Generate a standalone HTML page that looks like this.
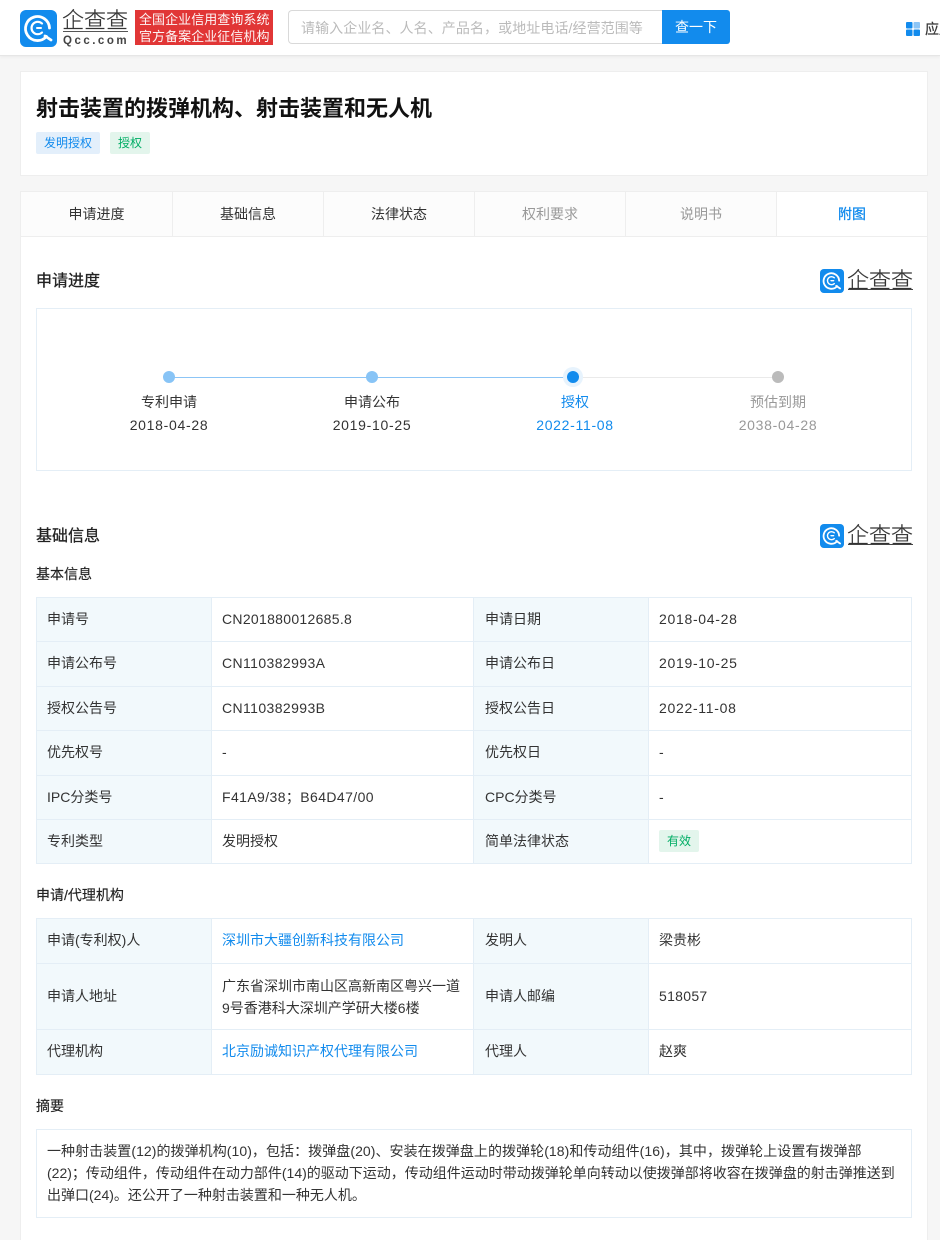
<!DOCTYPE html>
<html lang="zh-CN"><head><meta charset="utf-8"><title>专利详情</title>
<style>
*{box-sizing:border-box;margin:0;padding:0}
html,body{width:940px;height:1240px;overflow:hidden}
body{position:relative;background:#f6f6f6;font-family:"Liberation Sans","Noto Sans CJK SC",sans-serif;font-size:14px;color:#333}
.a{position:absolute;white-space:nowrap}
.b{position:absolute}
.t{line-height:20px}
.d{letter-spacing:.7px}
.n{letter-spacing:.4px}
.lab{background:#f2f9fc}
.line-h{position:absolute;height:1px;background:#e4eef6}
.line-v{position:absolute;width:1px;background:#e4eef6}
.tab{position:absolute;top:192px;height:44px;line-height:44px;text-align:center;background:#fcfcfc;border-right:1px solid #eee}
.h2{font-size:16px;font-weight:400;color:#222;-webkit-text-stroke:.3px #222;line-height:22px}
.h3{font-size:14px;color:#222;-webkit-text-stroke:.15px #222}
.lg{font-size:22px;line-height:30px;color:#333;font-weight:300;-webkit-text-stroke:.2px #333}
a{color:#128bed;text-decoration:none}
</style></head><body>

<!-- header -->
<div class="b" style="left:0;top:0;width:940px;height:56px;background:#fff;border-bottom:1px solid #e6e6e6;box-shadow:0 1px 3px rgba(0,0,0,.05)"></div>
<svg class="b" style="left:20px;top:10px" width="37" height="37" viewBox="0 0 37 37">
<rect width="37" height="37" rx="6" fill="#128bed"/>
<path d="M26.5 26.5A12 12 0 1 1 29.5 18" fill="none" stroke="#fff" stroke-width="2.8" stroke-linecap="round"/>
<path d="M22 22.5A6.2 6.2 0 1 1 22 13.5" fill="none" stroke="#fff" stroke-width="2.2" stroke-linecap="round"/>
<path d="M17 18h4" stroke="#fff" stroke-width="2" stroke-linecap="round"/>
<path d="M25 26l6 4" stroke="#fff" stroke-width="2.8" stroke-linecap="round"/>
</svg>
<div class="a lg" style="left:62px;top:6px">企查查</div>
<div class="b" style="left:63px;top:31px;width:65px;height:1px;background:#555"></div>
<div class="a" style="left:63px;top:35px;font-size:11.5px;line-height:12px;font-weight:700;letter-spacing:2.5px;color:#444">Qcc.com</div>
<div class="b" style="left:135px;top:10px;width:138px;height:35px;background:#e13636"></div>
<div class="a" style="left:139px;top:11px;font-size:13px;line-height:17px;color:#fff;letter-spacing:.05px;opacity:.95">全国企业信用查询系统<br>官方备案企业征信机构</div>
<div class="b" style="left:288px;top:10px;width:375px;height:34px;background:#fff;border:1px solid #d9d9d9;border-right:0;border-radius:4px 0 0 4px"></div>
<div class="a" style="left:301px;top:18px;font-size:14px;line-height:20px;color:#bbb;letter-spacing:.08px">请输入企业名、人名、产品名，或地址电话/经营范围等</div>
<div class="b" style="left:662px;top:10px;width:68px;height:34px;background:#128bed;border-radius:0 3px 3px 0;color:#fff;text-align:center;line-height:34px;font-size:14px">查一下</div>
<svg class="b" style="left:906px;top:22px" width="14" height="14" viewBox="0 0 14 14"><rect width="6.5" height="6.5" rx="1" fill="#128bed"/><rect x="7.5" width="6.5" height="6.5" rx="1" fill="#8cc5f6"/><rect y="7.5" width="6.5" height="6.5" rx="1" fill="#128bed"/><rect x="7.5" y="7.5" width="6.5" height="6.5" rx="1" fill="#128bed"/></svg>
<div class="a" style="left:925px;top:19px;line-height:20px;color:#333;-webkit-text-stroke:.2px #333">应用</div>

<!-- title card -->
<div class="b" style="left:20px;top:71px;width:908px;height:105px;background:#fff;border:1px solid #eee"></div>
<div class="a" style="left:36px;top:94px;font-size:22px;line-height:30px;font-weight:700;color:#111">射击装置的拨弹机构、射击装置和无人机</div>
<div class="a" style="left:36px;top:132px;width:64px;height:22px;background:#e3effb;border-radius:2px;color:#128bed;font-size:12px;line-height:22px;text-align:center">发明授权</div>
<div class="a" style="left:110px;top:132px;width:40px;height:22px;background:#e3f5ec;border-radius:2px;color:#00ad65;font-size:12px;line-height:22px;text-align:center">授权</div>

<!-- main card -->
<div class="b" style="left:20px;top:191px;width:908px;height:1060px;background:#fff;border:1px solid #eee"></div>
<div class="tab" style="left:21px;width:152px">申请进度</div>
<div class="tab" style="left:173px;width:151px">基础信息</div>
<div class="tab" style="left:324px;width:151px">法律状态</div>
<div class="tab" style="left:475px;width:151px;color:#999">权利要求</div>
<div class="tab" style="left:626px;width:151px;color:#999">说明书</div>
<div class="tab" style="left:777px;width:150px;background:#fff;color:#128bed;border-right:0;-webkit-text-stroke:.3px #128bed">附图</div>
<div class="b" style="left:21px;top:236px;width:906px;height:1px;background:#eee"></div>

<!-- progress -->
<div class="a h2" style="left:36px;top:271px">申请进度</div>
<svg class="b" style="left:820px;top:269px" width="24" height="24" viewBox="0 0 37 37">
<rect width="37" height="37" rx="6" fill="#128bed"/>
<path d="M26.5 26.5A12 12 0 1 1 29.5 18" fill="none" stroke="#fff" stroke-width="2.8" stroke-linecap="round"/>
<path d="M22 22.5A6.2 6.2 0 1 1 22 13.5" fill="none" stroke="#fff" stroke-width="2.2" stroke-linecap="round"/>
<path d="M17 18h4" stroke="#fff" stroke-width="2" stroke-linecap="round"/>
<path d="M25 26l6 4" stroke="#fff" stroke-width="2.8" stroke-linecap="round"/>
</svg>
<div class="a lg" style="left:847px;top:266px">企查查</div>
<div class="b" style="left:848px;top:289px;width:65px;height:1px;background:#444"></div>
<div class="b" style="left:36px;top:308px;width:876px;height:163px;border:1px solid #e4eef6"></div>
<div class="b" style="left:169px;top:377px;width:404px;height:1px;background:#8cc5f6"></div>
<div class="b" style="left:573px;top:377px;width:205px;height:1px;background:#eaeaea"></div>
<div class="b" style="left:163px;top:371px;width:12px;height:12px;border-radius:50%;background:#88c4f6"></div>
<div class="b" style="left:366px;top:371px;width:12px;height:12px;border-radius:50%;background:#88c4f6"></div>
<div class="b" style="left:563px;top:367px;width:20px;height:20px;border-radius:50%;background:#e7f3fd"></div>
<div class="b" style="left:567px;top:371px;width:12px;height:12px;border-radius:50%;background:#128bed"></div>
<div class="b" style="left:772px;top:371px;width:12px;height:12px;border-radius:50%;background:#bbb"></div>
<div class="a t" style="left:109px;width:120px;text-align:center;top:392px">专利申请</div>
<div class="a t d" style="left:109px;width:120px;text-align:center;top:415px">2018-04-28</div>
<div class="a t" style="left:312px;width:120px;text-align:center;top:392px">申请公布</div>
<div class="a t d" style="left:312px;width:120px;text-align:center;top:415px">2019-10-25</div>
<div class="a t" style="left:515px;width:120px;text-align:center;top:392px;color:#128bed">授权</div>
<div class="a t d" style="left:515px;width:120px;text-align:center;top:415px;color:#128bed">2022-11-08</div>
<div class="a t" style="left:718px;width:120px;text-align:center;top:392px;color:#999">预估到期</div>
<div class="a t d" style="left:718px;width:120px;text-align:center;top:415px;color:#999">2038-04-28</div>

<!-- basic -->
<div class="a h2" style="left:36px;top:526px">基础信息</div>
<svg class="b" style="left:820px;top:524px" width="24" height="24" viewBox="0 0 37 37">
<rect width="37" height="37" rx="6" fill="#128bed"/>
<path d="M26.5 26.5A12 12 0 1 1 29.5 18" fill="none" stroke="#fff" stroke-width="2.8" stroke-linecap="round"/>
<path d="M22 22.5A6.2 6.2 0 1 1 22 13.5" fill="none" stroke="#fff" stroke-width="2.2" stroke-linecap="round"/>
<path d="M17 18h4" stroke="#fff" stroke-width="2" stroke-linecap="round"/>
<path d="M25 26l6 4" stroke="#fff" stroke-width="2.8" stroke-linecap="round"/>
</svg>
<div class="a lg" style="left:847px;top:521px">企查查</div>
<div class="b" style="left:848px;top:544px;width:65px;height:1px;background:#444"></div>
<div class="a t h3" style="left:36px;top:564px">基本信息</div>

<!-- table 1 -->
<div class="b lab" style="left:36px;top:597px;width:175px;height:267px"></div>
<div class="b lab" style="left:473px;top:597px;width:175px;height:267px"></div>
<div class="line-h" style="left:36px;top:597px;width:876px"></div>
<div class="line-h" style="left:36px;top:641px;width:876px"></div>
<div class="line-h" style="left:36px;top:686px;width:876px"></div>
<div class="line-h" style="left:36px;top:730px;width:876px"></div>
<div class="line-h" style="left:36px;top:775px;width:876px"></div>
<div class="line-h" style="left:36px;top:819px;width:876px"></div>
<div class="line-h" style="left:36px;top:863px;width:876px"></div>
<div class="line-v" style="left:36px;top:597px;height:267px"></div>
<div class="line-v" style="left:211px;top:597px;height:267px"></div>
<div class="line-v" style="left:473px;top:597px;height:267px"></div>
<div class="line-v" style="left:648px;top:597px;height:267px"></div>
<div class="line-v" style="left:911px;top:597px;height:267px"></div>

<div class="a t" style="left:47px;top:609px">申请号</div><div class="a t n" style="left:222px;top:609px;letter-spacing:.3px">CN201880012685.8</div><div class="a t" style="left:485px;top:609px">申请日期</div><div class="a t d" style="left:659px;top:609px">2018-04-28</div>
<div class="a t" style="left:47px;top:653px">申请公布号</div><div class="a t n" style="left:222px;top:653px">CN110382993A</div><div class="a t" style="left:485px;top:653px">申请公布日</div><div class="a t d" style="left:659px;top:653px">2019-10-25</div>
<div class="a t" style="left:47px;top:698px">授权公告号</div><div class="a t n" style="left:222px;top:698px">CN110382993B</div><div class="a t" style="left:485px;top:698px">授权公告日</div><div class="a t d" style="left:659px;top:698px">2022-11-08</div>
<div class="a t" style="left:47px;top:742px">优先权号</div><div class="a t" style="left:222px;top:742px">-</div><div class="a t" style="left:485px;top:742px">优先权日</div><div class="a t" style="left:659px;top:742px">-</div>
<div class="a t" style="left:47px;top:787px">IPC分类号</div><div class="a t n" style="left:222px;top:787px">F41A9/38；B64D47/00</div><div class="a t" style="left:485px;top:787px">CPC分类号</div><div class="a t" style="left:659px;top:787px">-</div>
<div class="a t" style="left:47px;top:831px">专利类型</div><div class="a t" style="left:222px;top:831px">发明授权</div><div class="a t" style="left:485px;top:831px">简单法律状态</div>
<div class="a" style="left:659px;top:830px;width:40px;height:22px;background:#e3f5ec;border-radius:2px;color:#00ad65;font-size:12px;line-height:22px;text-align:center">有效</div>

<div class="a t h3" style="left:36px;top:885px">申请/代理机构</div>

<!-- table 2 -->
<div class="b lab" style="left:36px;top:918px;width:175px;height:157px"></div>
<div class="b lab" style="left:473px;top:918px;width:175px;height:157px"></div>
<div class="line-h" style="left:36px;top:918px;width:876px"></div>
<div class="line-h" style="left:36px;top:963px;width:876px"></div>
<div class="line-h" style="left:36px;top:1029px;width:876px"></div>
<div class="line-h" style="left:36px;top:1074px;width:876px"></div>
<div class="line-v" style="left:36px;top:918px;height:157px"></div>
<div class="line-v" style="left:211px;top:918px;height:157px"></div>
<div class="line-v" style="left:473px;top:918px;height:157px"></div>
<div class="line-v" style="left:648px;top:918px;height:157px"></div>
<div class="line-v" style="left:911px;top:918px;height:157px"></div>

<div class="a t" style="left:47px;top:930px">申请(专利权)人</div><div class="a t" style="left:222px;top:930px"><a>深圳市大疆创新科技有限公司</a></div><div class="a t" style="left:485px;top:930px">发明人</div><div class="a t" style="left:659px;top:930px">梁贵彬</div>
<div class="a t" style="left:47px;top:986px">申请人地址</div><div class="a" style="left:222px;top:975px;line-height:22px">广东省深圳市南山区高新南区粤兴一道<br>9号香港科大深圳产学研大楼6楼</div><div class="a t" style="left:485px;top:986px">申请人邮编</div><div class="a t" style="left:659px;top:986px;letter-spacing:.3px">518057</div>
<div class="a t" style="left:47px;top:1041px">代理机构</div><div class="a t" style="left:222px;top:1041px"><a>北京励诚知识产权代理有限公司</a></div><div class="a t" style="left:485px;top:1041px">代理人</div><div class="a t" style="left:659px;top:1041px">赵爽</div>

<div class="a t h3" style="left:36px;top:1096px">摘要</div>
<div class="b" style="left:36px;top:1129px;width:876px;height:89px;border:1px solid #e4eef6"></div>
<div class="a" style="left:47px;top:1140px;line-height:22px"><span style="letter-spacing:.06px">一种射击装置(12)的拨弹机构(10)，包括：拨弹盘(20)、安装在拨弹盘上的拨弹轮(18)和传动组件(16)，其中，拨弹轮上设置有拨弹部</span><br>(22)；传动组件，传动组件在动力部件(14)的驱动下运动，传动组件运动时带动拨弹轮单向转动以使拨弹部将收容在拨弹盘的射击弹推送到<br>出弹口(24)。还公开了一种射击装置和一种无人机。</div>

</body></html>
